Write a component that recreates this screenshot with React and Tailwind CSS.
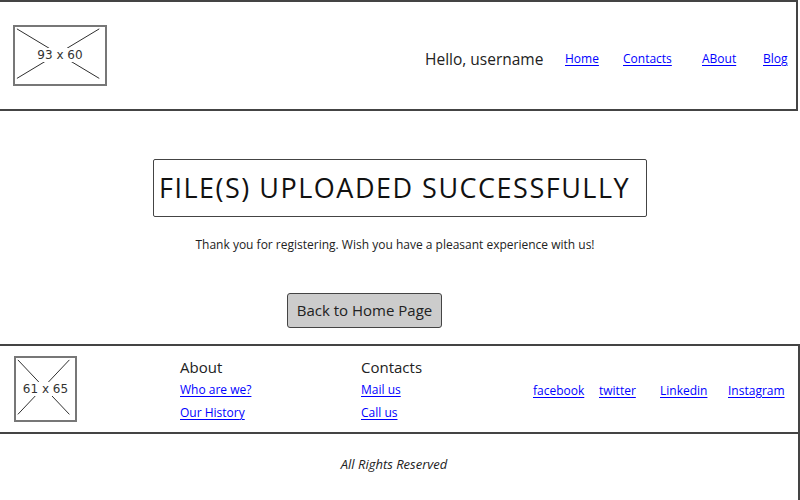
import React from "react";

const hand = { fontFamily: '"Comic Sans MS", "Open Sans", sans-serif' };

function Placeholder({ w, h, label }) {
  return (
    <div
      className="relative border-2 border-[#777] bg-white flex items-center justify-center"
      style={{ width: w, height: h }}
    >
      <svg className="absolute inset-0" width="100%" height="100%" viewBox={`0 0 ${w} ${h}`} preserveAspectRatio="none">
        <line x1="2" y1="2" x2={w - 6} y2={h - 6} stroke="#222" strokeWidth="1" />
        <line x1={w - 6} y1="2" x2="2" y2={h - 6} stroke="#222" strokeWidth="1" />
      </svg>
      <span
        className="relative bg-white px-[1px] text-[12px] leading-[14px] text-[#333]"
        style={{ fontFamily: '"DejaVu Sans", sans-serif' }}
      >
        {label}
      </span>
    </div>
  );
}

const linkCls = "text-[#0000ff] underline underline-offset-2 decoration-1";

export default function App() {
  return (
    <div className="w-[800px] h-[500px] bg-white overflow-hidden text-[#222]" style={hand}>
      {/* Header */}
      <header className="w-[798px] h-[111px] border-t-2 border-r-2 border-b-2 border-[#444] flex items-center">
        <div className="ml-[13px] mt-[-1px]">
          <Placeholder w={94} h={61} label="93 x 60" />
        </div>
        <nav className="ml-auto flex items-center mt-[7px]">
          <span className="w-[140px] text-[15.5px] text-[#222] mt-[2px]">Hello, username</span>
          <a className={`${linkCls} w-[58px] text-[12px]`}>Home</a>
          <a className={`${linkCls} w-[79px] text-[12px]`}>Contacts</a>
          <a className={`${linkCls} w-[61px] text-[12px]`}>ABout</a>
          <a className={`${linkCls} w-[33px] text-[12px]`}>Blog</a>
        </nav>
      </header>

      {/* Main */}
      <main className="h-[233px] flex flex-col">
        <div className="mt-[48px] mx-auto w-[494px] h-[58px] border-[1.5px] border-[#444] rounded-[2px] flex items-center pl-[5px]">
          <h1 className="text-[27px] tracking-[1.5px] text-[#111] whitespace-nowrap">FILE(S) UPLOADED SUCCESSFULLY</h1>
        </div>
        <p className="mt-[19px] text-center pr-[10px] text-[12px] text-[#222]">
          Thank you for registering. Wish you have a pleasant experience with us!
        </p>
        <button className="mt-[39px] ml-[287px] w-[155px] h-[35px] bg-[#cccccc] border-[1.5px] border-[#444] rounded-[3px] text-[15px] text-[#222]">
          Back to Home Page
        </button>
      </main>

      {/* Footer */}
      <footer className="w-[800px] h-[90px] border-t-2 border-r-2 border-b-2 border-[#444] flex items-center">
        <div className="ml-[14px]">
          <Placeholder w={63} h={66} label="61 x 65" />
        </div>
        <div className="ml-[103px] w-[181px] flex flex-col">
          <span className="text-[15px] leading-[20px] text-[#222]">About</span>
          <a className={`${linkCls} mt-[4px] text-[12px] leading-[18px]`}>Who are we?</a>
          <a className={`${linkCls} mt-[5px] text-[12px] leading-[18px]`}>Our History</a>
        </div>
        <div className="w-[172px] flex flex-col">
          <span className="text-[15px] leading-[20px] text-[#222]">Contacts</span>
          <a className={`${linkCls} mt-[4px] text-[12px] leading-[18px]`}>Mail us</a>
          <a className={`${linkCls} mt-[5px] text-[12px] leading-[18px]`}>Call us</a>
        </div>
        <div className="flex items-center text-[12px] mt-[3px]">
          <a className={`${linkCls} w-[66px]`}>facebook</a>
          <a className={`${linkCls} w-[61px]`}>twitter</a>
          <a className={`${linkCls} w-[68px]`}>Linkedin</a>
          <a className={linkCls}>Instagram</a>
        </div>
      </footer>

      <div className="w-[800px] h-[70px] border-r-2 border-[#444] flex justify-center pt-[21px]">
        <span className="italic text-[13px] text-[#222] mr-[10px]">All Rights Reserved</span>
      </div>
    </div>
  );
}
